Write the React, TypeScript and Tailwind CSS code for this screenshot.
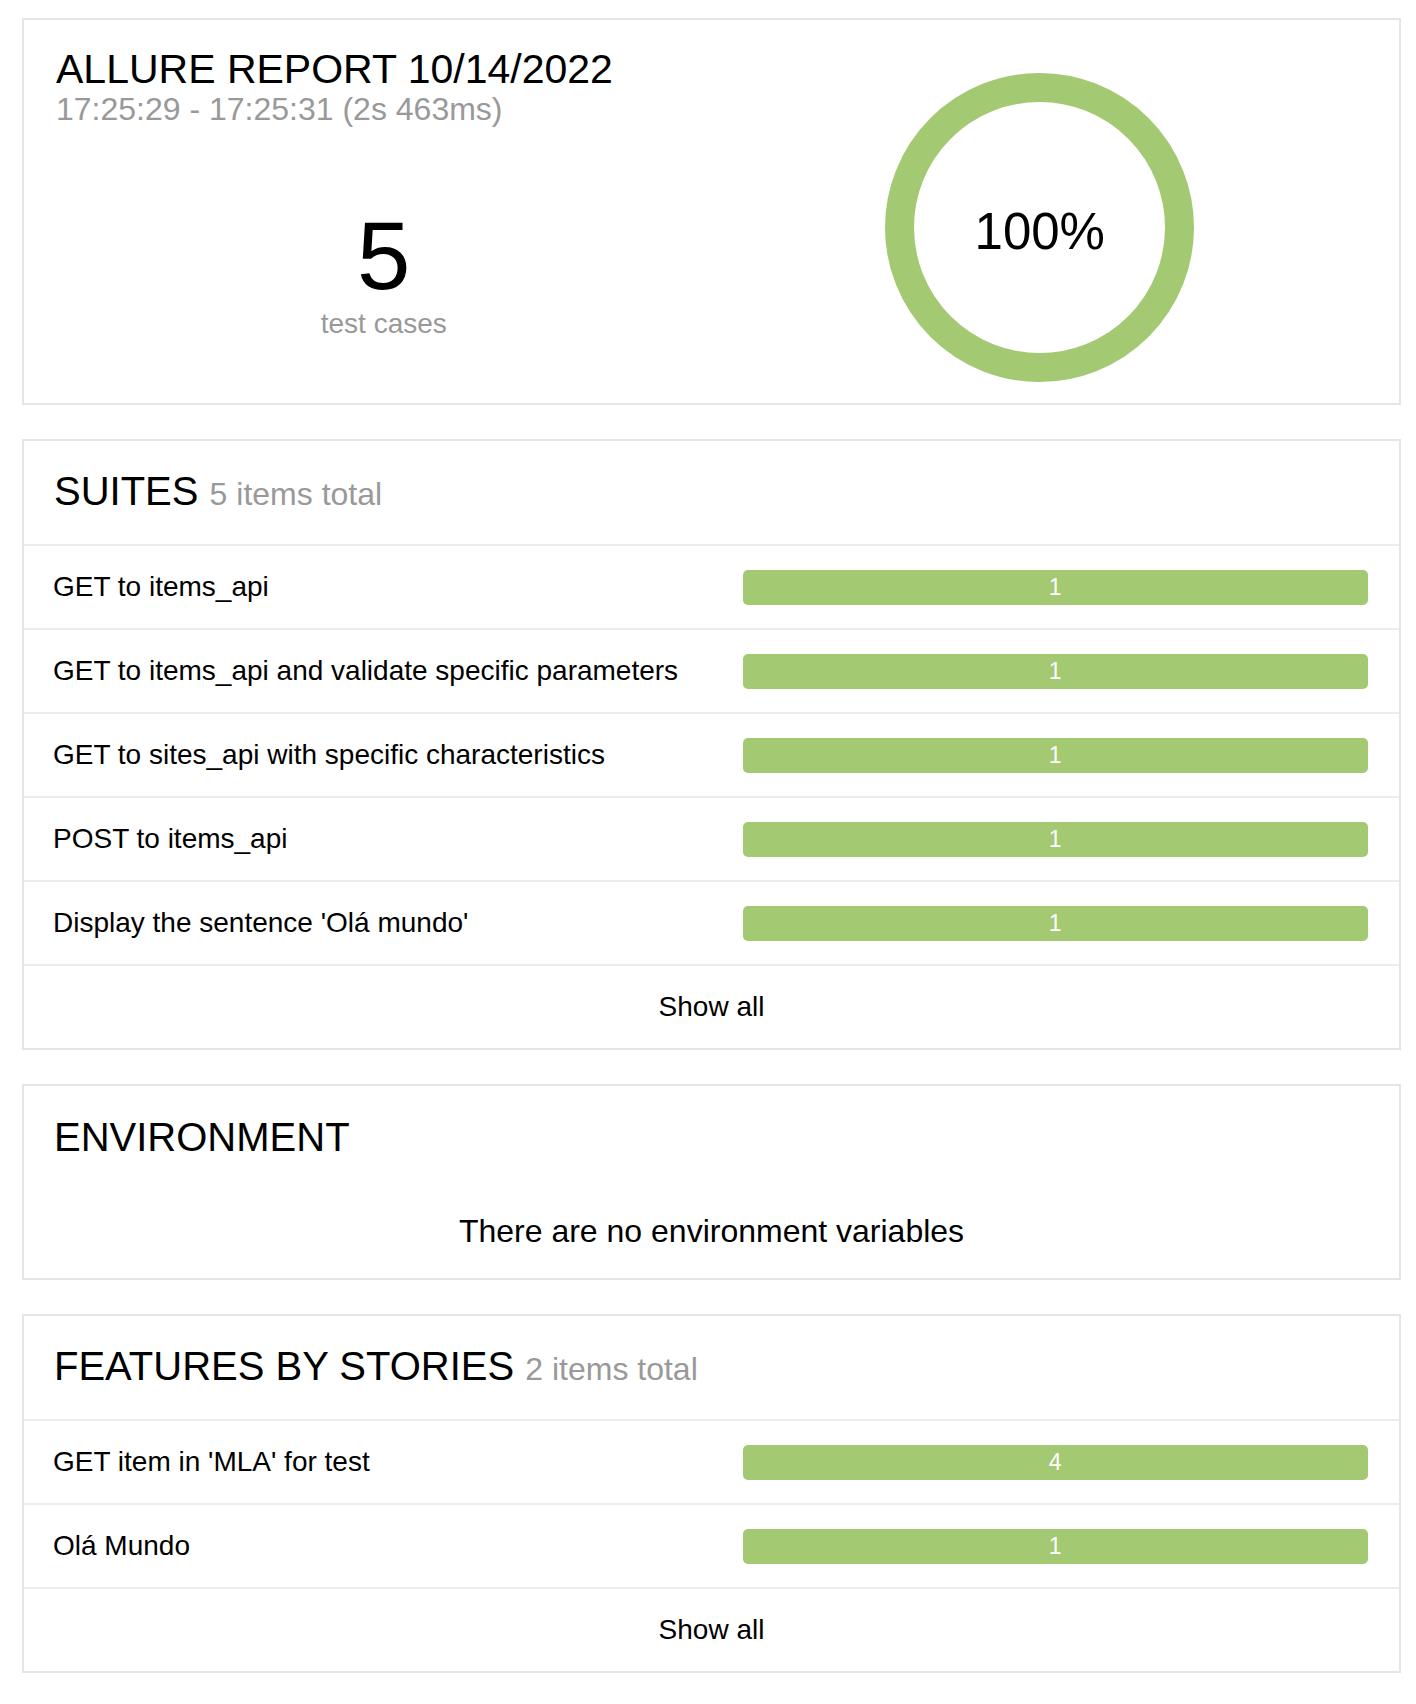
import React from 'react';

type Item = { name: string; count: number };

const suites: Item[] = [
  { name: 'GET to items_api', count: 1 },
  { name: 'GET to items_api and validate specific parameters', count: 1 },
  { name: 'GET to sites_api with specific characteristics', count: 1 },
  { name: 'POST to items_api', count: 1 },
  { name: "Display the sentence 'Olá mundo'", count: 1 },
];

const stories: Item[] = [
  { name: "GET item in 'MLA' for test", count: 4 },
  { name: 'Olá Mundo', count: 1 },
];

const Row: React.FC<{ item: Item }> = ({ item }) => (
  <div className="flex h-[84px] border-b-2 border-[#e9edf0]">
    <div className="w-1/2 pl-[29px] flex items-center text-[28px] text-black">{item.name}</div>
    <div className="w-1/2 px-[31px] flex items-center">
      <div className="w-full h-[35px] rounded-[5px] bg-[#a3c972] flex items-center justify-center text-white text-[23px] leading-none">
        {item.count}
      </div>
    </div>
  </div>
);

const WidgetHeader: React.FC<{ title: string; total: number }> = ({ title, total }) => (
  <div className="h-[105px] border-b-2 border-[#e9edf0] pl-[30px] pt-[30px]">
    <span className="text-[40px] leading-[40px] text-black">{title} </span>
    <span className="text-[32px] leading-[40px] text-[#999]">{total} items total</span>
  </div>
);

const ListWidget: React.FC<{ title: string; items: Item[] }> = ({ title, items }) => (
  <section className="border-2 border-[#e5e5e5] bg-white">
    <WidgetHeader title={title} total={items.length} />
    {items.map((item) => (
      <Row key={item.name} item={item} />
    ))}
    <div className="h-[82px] flex items-center justify-center text-[28px] text-black">Show all</div>
  </section>
);

export default function App() {
  return (
    <div className="min-h-screen bg-white pl-[22px] pr-[15px] pt-[18px] pb-[33px] flex flex-col gap-[34px] font-['Liberation_Sans',Arial,sans-serif]">
      {/* Summary */}
      <section className="border-2 border-[#e5e5e5] h-[387px] flex">
        <div className="w-1/2 pl-[32px] pt-[29px]">
          <div className="text-[41px] leading-[41px] text-black">ALLURE REPORT 10/14/2022</div>
          <div className="text-[32px] leading-[32px] text-[#999] mt-[3px]">17:25:29 - 17:25:31 (2s 463ms)</div>
          <div className="mt-[83px] text-center">
            <div className="text-[96px] leading-[96px] text-black">5</div>
            <div className="text-[28px] leading-[28px] text-[#999] mt-[6px]">test cases</div>
          </div>
        </div>
        <div className="w-1/2 pr-[31px] pt-[53px] flex justify-center items-start">
          <div className="w-[309px] h-[309px] rounded-full border-[29px] border-[#a3c972] flex items-center justify-center">
            <span className="text-[51px] leading-none text-black mt-[8px]">100%</span>
          </div>
        </div>
      </section>

      <ListWidget title="SUITES" items={suites} />

      {/* Environment */}
      <section className="border-2 border-[#e5e5e5] h-[196px] pl-[30px] pt-[31px]">
        <div className="text-[40px] leading-[40px] text-black">ENVIRONMENT</div>
        <div className="mt-[58px] text-center text-[32px] leading-[32px] text-black -ml-[30px]">
          There are no environment variables
        </div>
      </section>

      <ListWidget title="FEATURES BY STORIES" items={stories} />
    </div>
  );
}
